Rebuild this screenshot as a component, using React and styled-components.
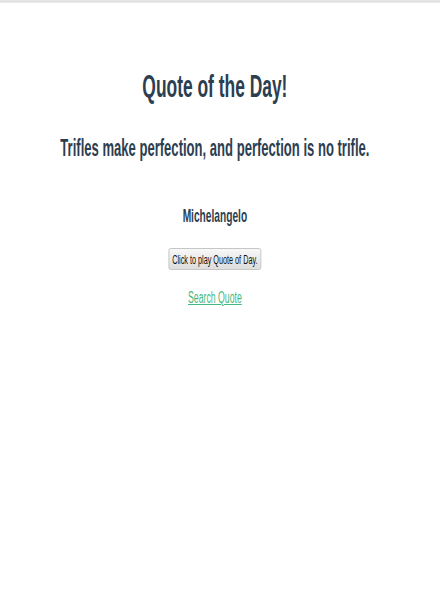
import React from 'react';
import styled, {createGlobalStyle} from 'styled-components';

const GlobalStyle = createGlobalStyle`
  html, body {
    margin: 0;
    padding: 0;
    background: #fff;
    overflow: hidden;
  }
`;

const TopRule = styled.div`
  height: 3px;
  border-top: 1px solid #e6e6e6;
  background: linear-gradient(#d9d9d9, #f0f0f0);
  box-sizing: border-box;
`;

// the page is drawn at its natural width and squeezed sideways, as in the shot
const Page = styled.div`
  width: 790px;
  transform: scaleX(0.544);
  transform-origin: 0 0;
  font-family: "Liberation Sans", Arial, Helvetica, sans-serif;
  text-align: center;
  color: #2c3e50;
`;

const Title = styled.h1`
  font-size: 32px;
  font-weight: bold;
  margin: 65px 0 0;
`;

const Quote = styled.h2`
  font-size: 24px;
  font-weight: bold;
  margin: 29px 0 0;
`;

const Author = styled.h3`
  font-size: 18.72px;
  font-weight: bold;
  margin: 43px 0 0;
`;

const Actions = styled.div`
  display: flex;
  justify-content: center;
  margin-top: 21px;
`;

const PlayButton = styled.button`
  font-family: "Liberation Sans", Arial, sans-serif;
  font-size: 13.33px;
  color: #111;
  padding: 0 6px;
  height: 22px;
  border: 1px solid #b5b5b5;
  border-radius: 3px;
  background: linear-gradient(#f8f8f8, #dddddd);
  cursor: pointer;
`;

const LinkRow = styled.p`
  margin: 19px 0 0;
  font-size: 16px;
`;

const SearchLink = styled.a`
  color: #42b983;
  text-decoration: underline;
`;

class App extends React.Component {

  state = {
    quote: 'Trifles make perfection, and perfection is no trifle.',
    author: 'Michelangelo'
  }

  play = () => {
    if (!window.speechSynthesis) return;
    window.speechSynthesis.speak(new SpeechSynthesisUtterance(this.state.quote));
  }

  render() {
    return (
      <>
        <GlobalStyle />
        <TopRule />
        <Page>
          <Title>Quote of the Day!</Title>
          <Quote>{this.state.quote}</Quote>
          <Author>{this.state.author}</Author>
          <Actions>
            <PlayButton type="button" onClick={this.play}>Click to play Quote of Day.</PlayButton>
          </Actions>
          <LinkRow>
            <SearchLink href="#search">Search Quote</SearchLink>
          </LinkRow>
        </Page>
      </>
    )
  }
};

export default App;
